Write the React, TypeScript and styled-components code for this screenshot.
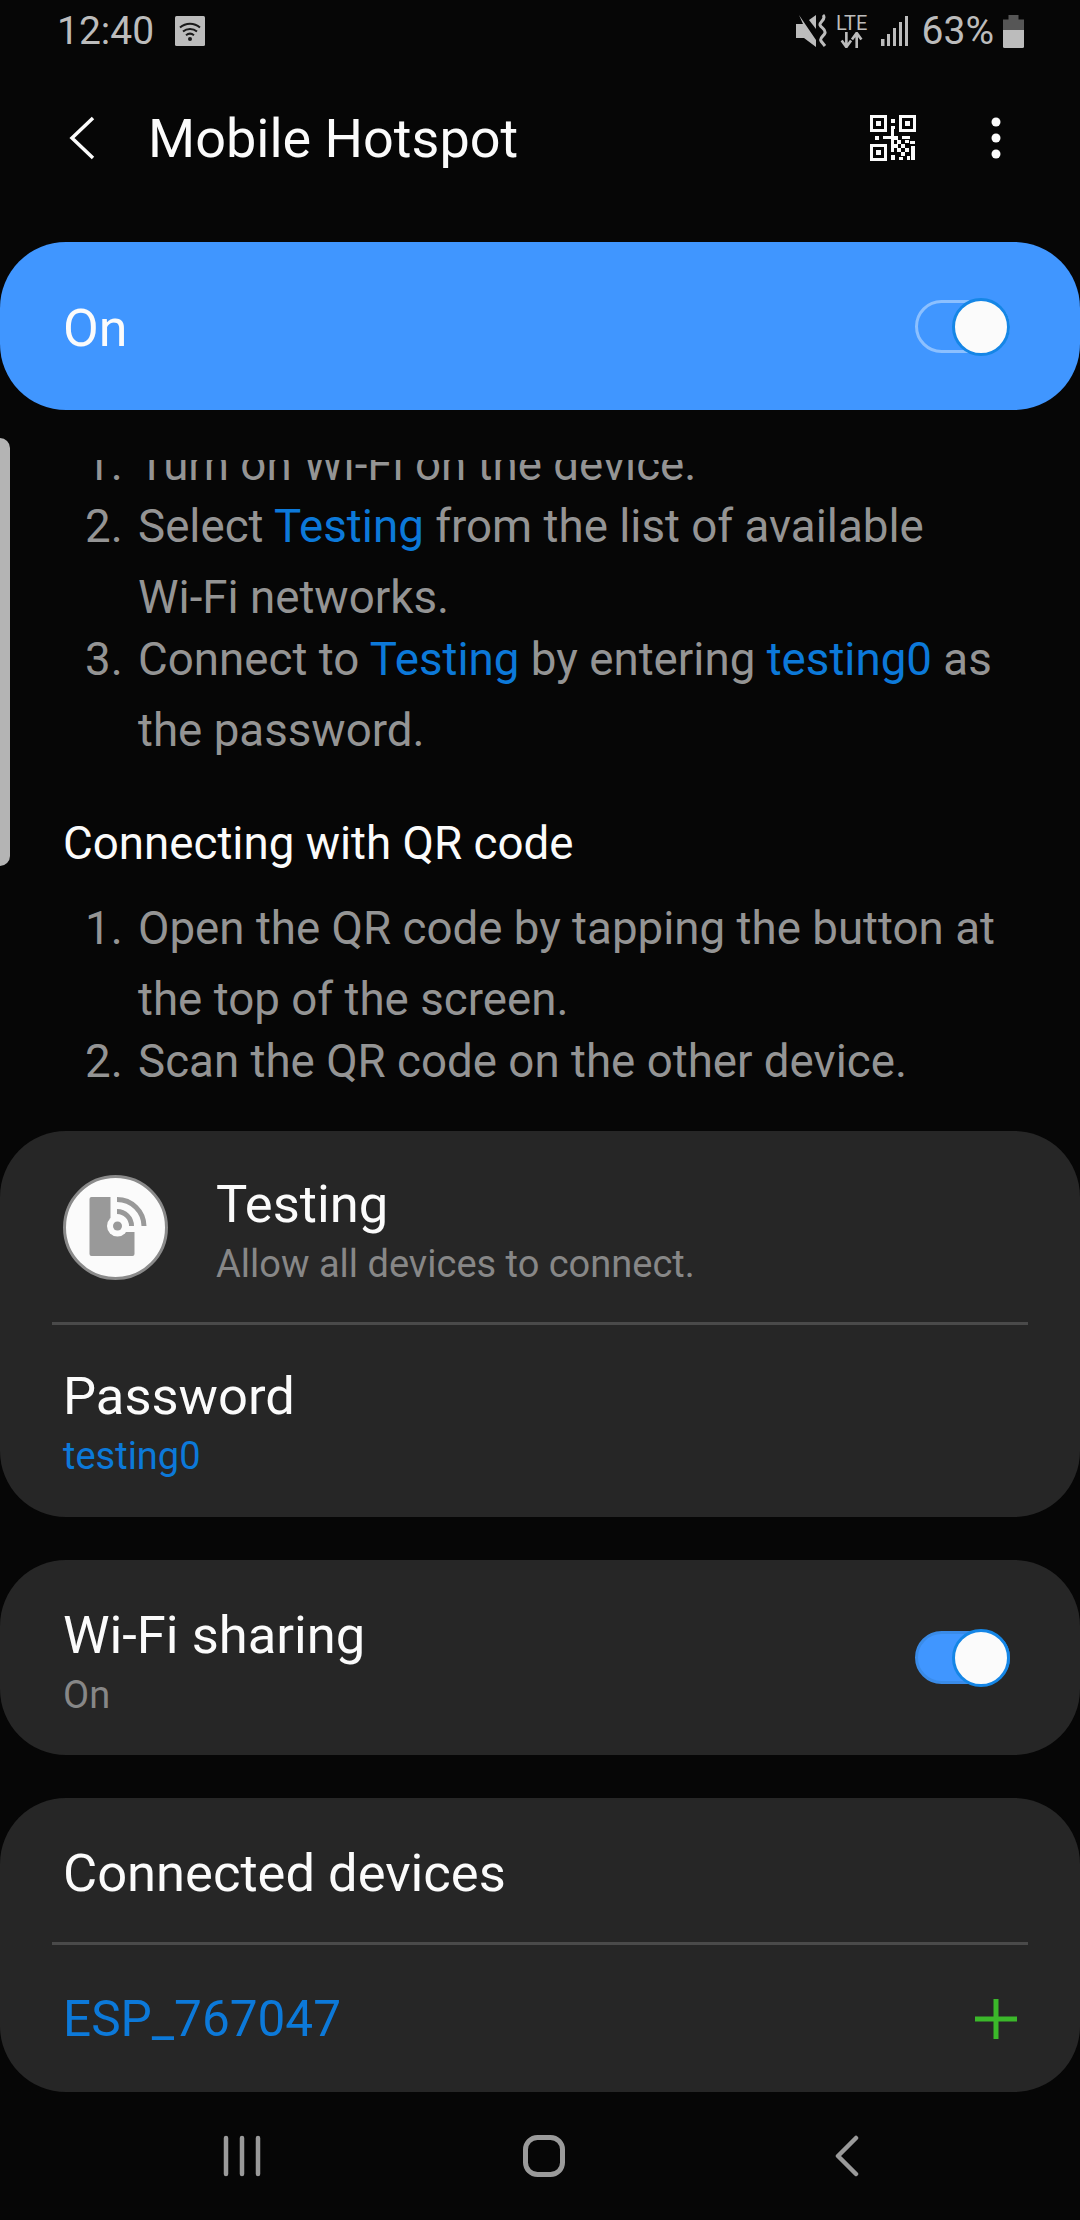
import styled, { createGlobalStyle } from "styled-components"

const GlobalStyle = createGlobalStyle`
  html, body {
    margin: 0;
    padding: 0;
    background: #060606;
  }
  * {
    box-sizing: border-box;
  }
`

const blue = "#0c79d9"

function WifiBadge() {
  return (
    <svg width="30" height="30" viewBox="0 0 30 30">
      <rect width="30" height="30" rx="1.5" fill="#bcbcbc" />
      <g fill="none" stroke="#1a1a1a" strokeWidth="2">
        <path d="M5 11.5c5.800-5 14.200-5 20 0" />
        <path d="M8 15.500c4-3.400 10-3.400 14 0" />
        <path d="M11 19.200c2.400-1.900 5.600-1.900 8 0" />
      </g>
      <circle cx="15" cy="23" r="2" fill="#1a1a1a" />
    </svg>
  )
}

function MuteIcon() {
  return (
    <svg width="32" height="34" viewBox="0 0 32 34">
      <path d="M3 1L20 26V33L8 24H0V10H7z" fill="#bcbcbc" />
      <path d="M13 6L20 1V15z" fill="#bcbcbc" />
      <path d="M27 1C31 5 23 8 24 11C25 14 30 15 29 19C28 22 23 24 25 27L29 32" fill="none" stroke="#bcbcbc" strokeWidth="3" />
    </svg>
  )
}

function LteArrows() {
  return (
    <svg width="24" height="16" viewBox="0 0 24 17">
      <path d="M6 0v15M1 9l5 7 5-7M17 17V2M12 8l5-7 5 7" fill="none" stroke="#bcbcbc" strokeWidth="2.800" />
    </svg>
  )
}

function SignalIcon() {
  return (
    <svg width="27" height="30" viewBox="0 0 27 30">
      <g fill="#bcbcbc">
        <rect x="0" y="23" width="3.500" height="7" />
        <rect x="6" y="18" width="3" height="12" />
        <rect x="12" y="12" width="3" height="18" />
        <rect x="18" y="6" width="3" height="24" />
        <rect x="24" y="0" width="3" height="30" />
      </g>
    </svg>
  )
}

function BatteryIcon() {
  return (
    <svg width="21" height="33" viewBox="0 0 21 33">
      <path d="M5.500 0h10v4.500H21V15H0V4.500h5.500z" fill="#565656" />
      <path d="M0 15h21v16.500a1.500 1.500 0 0 1-1.500 1.500h-18A1.500 1.500 0 0 1 0 31.500z" fill="#bcbcbc" />
    </svg>
  )
}

function BackIcon() {
  return (
    <svg width="28" height="44" viewBox="0 0 28 44">
      <path d="M25 2L4 22l21 20" fill="none" stroke="#fbfbfb" strokeWidth="3.500" />
    </svg>
  )
}

function QrIcon() {
  return (
    <svg width="46" height="46" viewBox="0 0 46 46">
      <g fill="none" stroke="#fbfbfb" strokeWidth="3">
        <rect x="1.500" y="1.500" width="14" height="14" />
        <rect x="30.500" y="1.500" width="14" height="14" />
        <rect x="1.500" y="30.500" width="14" height="14" />
      </g>
      <g fill="#fbfbfb">
        <rect x="6" y="6" width="5" height="5" />
        <rect x="35" y="6" width="5" height="5" />
        <rect x="6" y="35" width="5" height="5" />
        <rect x="21" y="4" width="4" height="4" />
        <rect x="21" y="11" width="4" height="3" />
        <rect x="5" y="21" width="4" height="4" />
        <rect x="13" y="21" width="11" height="3" />
        <rect x="21" y="13" width="3" height="24" />
        <rect x="24" y="21" width="4" height="4" />
        <rect x="32" y="21" width="8" height="3" />
        <rect x="27" y="25" width="4" height="4" />
        <rect x="35" y="25" width="4" height="3" />
        <rect x="40" y="26" width="5" height="3" />
        <rect x="24" y="29" width="4" height="4" />
        <rect x="31" y="29" width="4" height="4" />
        <rect x="41" y="31" width="4" height="14" />
        <rect x="27" y="33" width="4" height="4" />
        <rect x="35" y="33" width="4" height="4" />
        <rect x="21" y="40" width="4" height="5" />
        <rect x="31" y="37" width="4" height="4" />
        <rect x="29" y="42" width="4" height="3" />
        <rect x="37" y="41" width="3" height="4" />
      </g>
    </svg>
  )
}

function MoreIcon() {
  return (
    <svg width="10" height="42" viewBox="0 0 10 42">
      <g fill="#fbfbfb">
        <circle cx="5" cy="5" r="4.500" />
        <circle cx="5" cy="21" r="4.500" />
        <circle cx="5" cy="37" r="4.500" />
      </g>
    </svg>
  )
}

function HotspotGlyph() {
  return (
    <svg width="62" height="62" viewBox="0 0 62 62">
      <path d="M6.500 1H25.500V36H49.500V58a2 2 0 0 1-2 2H6.500a2 2 0 0 1-2-2V3a2 2 0 0 1 2-2z" fill="#999" />
      <circle cx="32.500" cy="30" r="10.500" fill="#fbfbfb" />
      <circle cx="32.500" cy="30" r="4.500" fill="#999" />
      <path d="M32 3.500A27 27 0 0 1 59 30" fill="none" stroke="#999" strokeWidth="5" />
      <path d="M32 15.500A14.500 14.500 0 0 1 46.500 30" fill="none" stroke="#999" strokeWidth="5" />
    </svg>
  )
}

function PlusIcon() {
  return (
    <svg width="42" height="40" viewBox="0 0 42 40">
      <path d="M21 0v40M0 20h42" stroke="#3bb82a" strokeWidth="5" />
    </svg>
  )
}

function RecentsIcon() {
  return (
    <svg width="38" height="42" viewBox="0 0 38 42">
      <path d="M3 3v36M19 3v36M35 3v36" stroke="#9a9a9a" strokeWidth="4.500" strokeLinecap="round" />
    </svg>
  )
}

function HomeIcon() {
  return (
    <svg width="42" height="42" viewBox="0 0 42 42">
      <rect x="2.500" y="2.500" width="37" height="37" rx="12" fill="none" stroke="#9a9a9a" strokeWidth="5" />
    </svg>
  )
}

function NavBackIcon() {
  return (
    <svg width="26" height="42" viewBox="0 0 26 42">
      <path d="M22 3L4 21l18 18" fill="none" stroke="#9a9a9a" strokeWidth="4.500" strokeLinecap="round" strokeLinejoin="round" />
    </svg>
  )
}

type Step = { text: string; link?: boolean }[]

const steps: Step[] = [
  [{ text: "Turn on Wi-Fi on the device." }],
  [
    { text: "Select " },
    { text: "Testing", link: true },
    { text: " from the list of available Wi-Fi networks." },
  ],
  [
    { text: "Connect to " },
    { text: "Testing", link: true },
    { text: " by entering " },
    { text: "testing0", link: true },
    { text: " as the password." },
  ],
]

const qrSteps: Step[] = [
  [{ text: "Open the QR code by tapping the button at the top of the screen." }],
  [{ text: "Scan the QR code on the other device." }],
]

function Steps({ items }: { items: Step[] }) {
  return (
    <StepList>
      {items.map((parts, i) => (
        <StepItem key={i}>
          <StepNumber>{i + 1}.</StepNumber>
          <span>
            {parts.map((p, j) => (p.link ? <Link key={j}>{p.text}</Link> : p.text))}
          </span>
        </StepItem>
      ))}
    </StepList>
  )
}

export default function App() {
  return (
    <Page>
      <GlobalStyle />
      <StatusBar>
        <StatusGroup $gap={21}>
          <StatusText>12:40</StatusText>
          <WifiBadge />
        </StatusGroup>
        <StatusGroup $gap={9}>
          <MuteIcon />
          <LteStack>
            <LteLabel>LTE</LteLabel>
            <LteArrows />
          </LteStack>
          <SignalIcon />
          <Percent>63%</Percent>
          <BatteryIcon />
        </StatusGroup>
      </StatusBar>

      <Toolbar>
        <BackIcon />
        <Title>Mobile Hotspot</Title>
        <ToolbarActions>
          <QrIcon />
          <MoreIcon />
        </ToolbarActions>
      </Toolbar>

      <MasterBar>
        <MasterLabel>On</MasterLabel>
        <Switch $solid={false}>
          <Thumb />
        </Switch>
      </MasterBar>

      <ScrollIndicator />

      <Scroller>
        <ScrollInner>
          <Steps items={steps} />
          <Heading>Connecting with QR code</Heading>
          <Steps items={qrSteps} />
        </ScrollInner>
      </Scroller>

      <Card>
        <NetworkRow>
          <NetworkBadge>
            <HotspotGlyph />
          </NetworkBadge>
          <RowText>
            <RowTitle>Testing</RowTitle>
            <RowSub>Allow all devices to connect.</RowSub>
          </RowText>
        </NetworkRow>
        <Divider />
        <PasswordRow>
          <RowTitle>Password</RowTitle>
          <RowValue>testing0</RowValue>
        </PasswordRow>
      </Card>

      <Card>
        <SharingRow>
          <RowText>
            <RowTitle>Wi-Fi sharing</RowTitle>
            <RowSub>On</RowSub>
          </RowText>
          <Switch $solid>
            <Thumb />
          </Switch>
        </SharingRow>
      </Card>

      <Card>
        <DevicesHeader>
          <RowTitle>Connected devices</RowTitle>
        </DevicesHeader>
        <Divider />
        <DeviceRow>
          <DeviceName>ESP_767047</DeviceName>
          <PlusIcon />
        </DeviceRow>
      </Card>

      <NavBar>
        <RecentsIcon />
        <HomeIcon />
        <NavBackIcon />
      </NavBar>
    </Page>
  )
}

const Page = styled.div`
  position: relative;
  width: 1080px;
  height: 2220px;
  overflow: hidden;
  display: flex;
  flex-direction: column;
  background: #060606;
  color: #fbfbfb;
  font-family: Roboto, "Liberation Sans", sans-serif;
`

const StatusBar = styled.div`
  height: 62px;
  padding: 0 56px 0 57px;
  display: flex;
  align-items: center;
  justify-content: space-between;
`

const StatusGroup = styled.div<{ $gap: number }>`
  display: flex;
  align-items: center;
  gap: ${p => p.$gap}px;
`

const StatusText = styled.span`
  font-size: 39px;
  color: #bcbcbc;
`

const Percent = styled(StatusText)`
  margin-left: 5px;
`

const LteStack = styled.div`
  display: flex;
  flex-direction: column;
  align-items: center;
  width: 30px;
  margin-right: 5px;
`

const LteLabel = styled.span`
  font-size: 20px;
  line-height: 17px;
  color: #bcbcbc;
`

const Toolbar = styled.div`
  height: 180px;
  padding: 0 79px 28px 68px;
  display: flex;
  align-items: center;
`

const Title = styled.h1`
  margin: 0 0 0 52px;
  font-size: 54px;
  font-weight: 400;
  flex: 1;
`

const ToolbarActions = styled.div`
  display: flex;
  align-items: center;
  gap: 75px;
`

const MasterBar = styled.div`
  height: 168px;
  flex: none;
  padding: 0 70px 0 63px;
  border-radius: 66px;
  background: #4096ff;
  display: flex;
  align-items: center;
  justify-content: space-between;
`

const MasterLabel = styled.span`
  font-size: 52px;
  padding-top: 4px;
`

const Switch = styled.div<{ $solid: boolean }>`
  position: relative;
  width: 95px;
  height: 53px;
  border-radius: 27px;
  background: ${p => (p.$solid ? "#4096ff" : "transparent")};
  border: 3px solid ${p => (p.$solid ? "#3a8be8" : "#8cc0ff")};
`

const Thumb = styled.div`
  position: absolute;
  top: -5px;
  right: -3px;
  width: 58px;
  height: 58px;
  border-radius: 50%;
  background: #fbfbfb;
  border: 3px solid #1586e6;
`

const ScrollIndicator = styled.div`
  position: absolute;
  left: 0;
  top: 438px;
  width: 10px;
  height: 428px;
  background: #b4b4b4;
  border-radius: 0 10px 10px 0;
`

const Scroller = styled.div`
  margin-top: 50px;
  height: 671px;
  flex: none;
  overflow: hidden;
`

const ScrollInner = styled.div`
  margin-top: -31px;
`

const StepList = styled.div`
  padding: 0 84px 0 85px;
`

const StepItem = styled.div`
  display: flex;
  font-size: 45.7px;
  line-height: 71px;
  color: #949494;
  margin-bottom: -9px;
`

const StepNumber = styled.span`
  flex: none;
  width: 53px;
`

const Link = styled.span`
  color: ${blue};
`

const Heading = styled.h2`
  margin: 57px 0 19px 63px;
  font-size: 45.7px;
  line-height: 60px;
  font-weight: 400;
  color: #fbfbfb;
`

const Card = styled.section`
  flex: none;
  background: #262626;
  border-radius: 66px;
  margin-bottom: 43px;

  &:last-of-type {
    margin-bottom: 0;
  }
`

const NetworkRow = styled.div`
  height: 191px;
  padding: 1px 64px 0 63px;
  display: flex;
  align-items: center;
  gap: 48px;
`

const NetworkBadge = styled.div`
  width: 105px;
  height: 105px;
  flex: none;
  border-radius: 50%;
  background: #fbfbfb;
  border: 3px solid #8a8a8a;
  display: flex;
  align-items: center;
  justify-content: center;
`

const RowText = styled.div`
  display: flex;
  flex-direction: column;
  padding-top: 14px;
`

const RowTitle = styled.div`
  font-size: 52.5px;
  line-height: 60px;
  color: #fbfbfb;
`

const RowSub = styled.div`
  font-size: 38px;
  line-height: 60px;
  color: #878787;
`

const RowValue = styled.div`
  font-size: 38px;
  line-height: 60px;
  color: ${blue};
`

const Divider = styled.div`
  height: 3px;
  margin: 0 52px;
  background: #4a4a4a;
`

const PasswordRow = styled.div`
  height: 192px;
  padding: 41px 63px 0;
`

const SharingRow = styled.div`
  height: 195px;
  padding: 0 70px 0 63px;
  display: flex;
  align-items: center;
  justify-content: space-between;
`

const DevicesHeader = styled.div`
  height: 144px;
  padding: 6px 63px 0;
  display: flex;
  align-items: center;
`

const DeviceRow = styled.div`
  height: 147px;
  padding: 0 63px;
  display: flex;
  align-items: center;
  justify-content: space-between;
`

const DeviceName = styled.span`
  font-size: 49.5px;
  color: ${blue};
`

const NavBar = styled.div`
  flex: 1;
  padding: 0 0 0 223px;
  display: flex;
  align-items: center;

  svg + svg {
    margin-left: 262px;
  }

  svg:last-child {
    margin-left: 269px;
  }
`
